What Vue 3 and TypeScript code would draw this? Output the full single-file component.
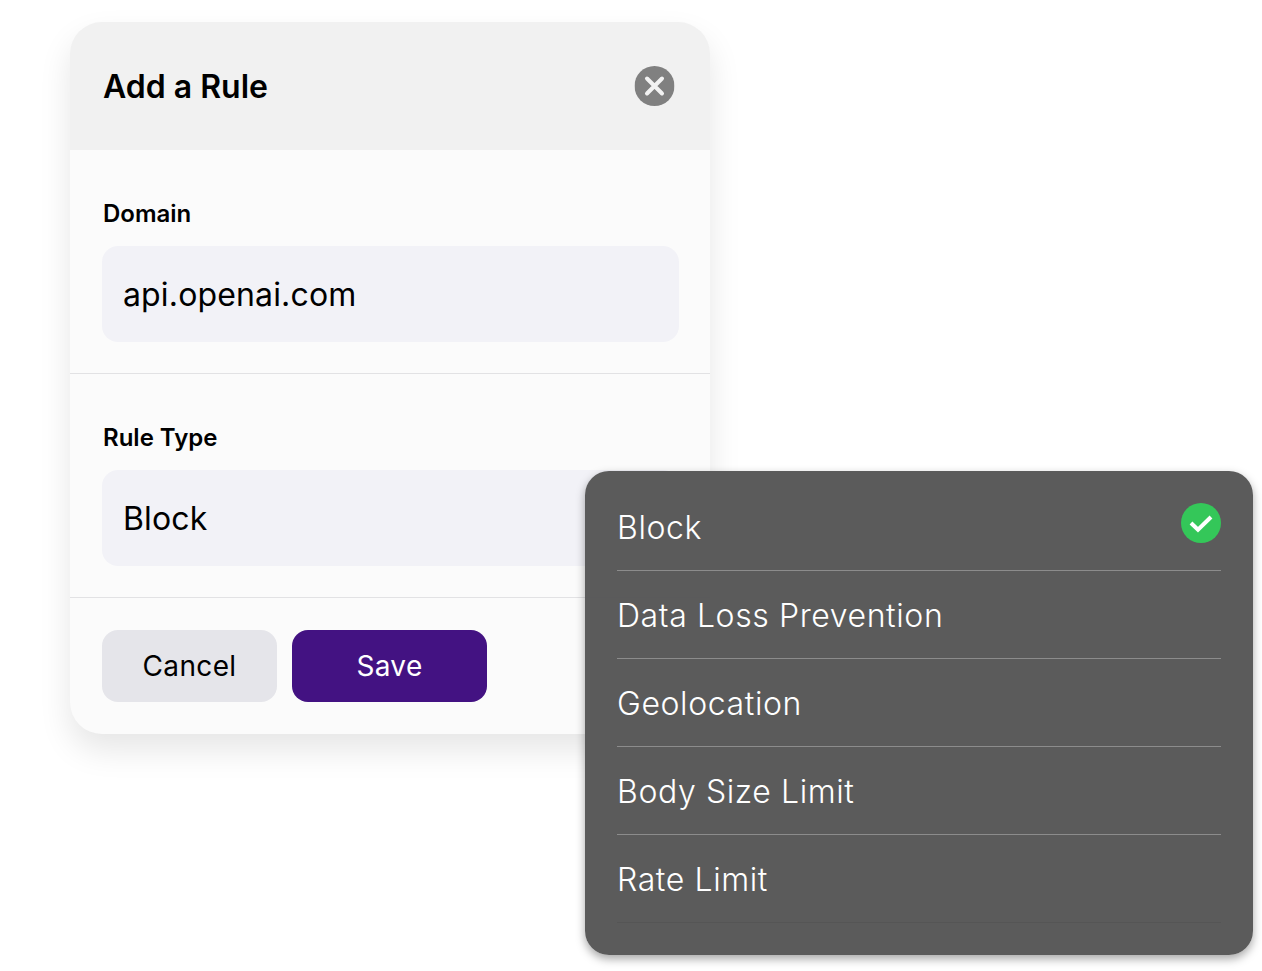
<script setup lang="ts">
const options: string[] = ['Block', 'Data Loss Prevention', 'Geolocation', 'Body Size Limit', 'Rate Limit']
</script>

<template>
  <div class="page">
    <section class="card">
      <header class="head">
        <h1 class="title">Add a Rule</h1>
        <svg class="close" viewBox="0 0 40 40" width="40" height="40" aria-label="Close">
          <circle cx="20" cy="20" r="20" fill="#808080" />
          <path d="M12.5 12.5 L27.5 27.5 M27.5 12.5 L12.5 27.5" stroke="#f2f2f2" stroke-width="4" stroke-linecap="round" />
        </svg>
      </header>
      <div class="field">
        <div class="label">Domain</div>
        <div class="input">api.openai.com</div>
      </div>
      <div class="field">
        <div class="label">Rule Type</div>
        <div class="input">Block</div>
      </div>
      <div class="actions">
        <button class="btn cancel">Cancel</button>
        <button class="btn save">Save</button>
      </div>
    </section>

    <div class="menu">
      <div v-for="(o, i) in options" :key="o" class="row" :class="{ last: i === options.length - 1 }">
        <span class="opt">{{ o }}</span>
        <svg v-if="i === 0" class="check" viewBox="0 0 40 40" width="40" height="40">
          <circle cx="20" cy="20" r="20" fill="#34c759" />
          <path d="M10 20 L17 26.8 L30 14" fill="none" stroke="#fff" stroke-width="4" />
        </svg>
      </div>
    </div>
  </div>
</template>

<style>
html, body { background: #fff; }
</style>

<style scoped>
.page {
  position: relative;
  width: 1262px;
  height: 971px;
  overflow: hidden;
  background: #fff;
  padding: 22px 0 0 70px;
  box-sizing: border-box;
  font-family: Inter, "Liberation Sans", sans-serif;
  color: #000;
}
.card {
  width: 640px;
  height: 712px;
  background: #fbfbfb;
  border-radius: 32px;
  overflow: hidden;
  box-shadow: 0 16px 32px rgba(0, 0, 0, 0.1);
}
.head {
  height: 128px;
  background: #f1f1f1;
  display: flex;
  align-items: center;
  justify-content: space-between;
  padding: 0 35px 0 33px;
  box-sizing: border-box;
}
.title {
  margin: 2px 0 0;
  font-size: 32px;
  font-weight: 600;
  line-height: 40px;
}
.close { display: block; transform: translateX(-0.5px); }
.field {
  height: 224px;
  padding: 48px 31px 0 32px;
  box-sizing: border-box;
  border-bottom: 1px solid #e2e2e4;
}
.label {
  font-size: 24px;
  font-weight: 600;
  line-height: 32px;
  height: 32px;
  margin-bottom: 16px;
  padding-left: 1px;
}
.input {
  height: 96px;
  border-radius: 16px;
  background: #f2f2f7;
  display: flex;
  align-items: center;
  padding: 0 21px;
  font-size: 32px;
  letter-spacing: 0.15px;
}
.actions {
  display: flex;
  gap: 15px;
  padding: 32px;
}
.btn {
  height: 72px;
  border: 0;
  border-radius: 16px;
  font-family: inherit;
  font-size: 28px;
  font-weight: 400;
  letter-spacing: 0.35px;
  padding: 0;
}
.cancel { width: 175px; background: #e5e5ea; color: #000; }
.save { width: 195px; background: #431282; color: #fff; }
.menu {
  position: absolute;
  left: 585px;
  top: 471px;
  width: 668px;
  height: 484px;
  background: rgba(86, 86, 86, 0.97);
  border-radius: 24px;
  padding: 12px 32px 0 32px;
  box-sizing: border-box;
  box-shadow: 0 4px 10px rgba(0, 0, 0, 0.35);
}
.row {
  height: 88px;
  box-sizing: border-box;
  border-bottom: 1px solid rgba(255, 255, 255, 0.3);
  display: flex;
  align-items: center;
  justify-content: space-between;
  padding-top: 2px;
}
.row.last { border-bottom-color: rgba(0, 0, 0, 0.06); }
.opt {
  color: #fff;
  font-size: 32px;
  font-weight: 300;
  letter-spacing: 0.6px;
}
.check { display: block; transform: translateY(-5px); }
</style>
